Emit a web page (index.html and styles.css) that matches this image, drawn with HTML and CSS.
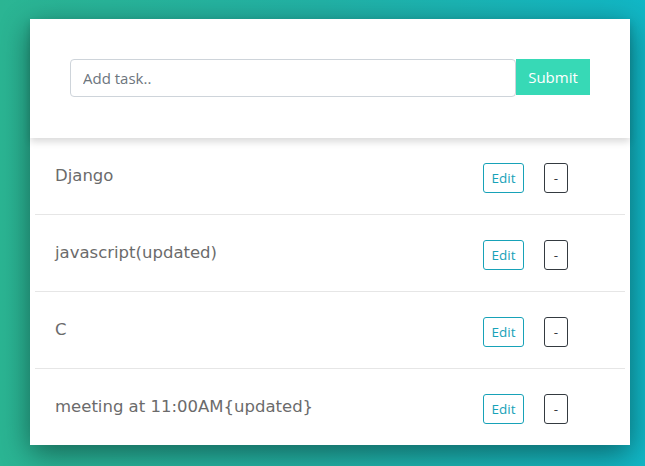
FILE: index.html
```html
<!DOCTYPE html>
<html lang="en">
<head>
<meta charset="utf-8">
<title>Tasks</title>
<link rel="stylesheet" href="styles.css">
</head>
<body>
<div class="card">
  <form class="card-header">
    <input class="task-input" type="text" placeholder="Add task..">
    <button class="submit-btn" type="button">Submit</button>
  </form>
  <div class="task-list">
    <div class="task-row">
      <span class="task-title">Django</span>
      <button class="btn-edit" type="button">Edit</button>
      <button class="btn-delete" type="button">-</button>
    </div>
    <div class="task-row">
      <span class="task-title">javascript(updated)</span>
      <button class="btn-edit" type="button">Edit</button>
      <button class="btn-delete" type="button">-</button>
    </div>
    <div class="task-row">
      <span class="task-title">C</span>
      <button class="btn-edit" type="button">Edit</button>
      <button class="btn-delete" type="button">-</button>
    </div>
    <div class="task-row last">
      <span class="task-title">meeting at 11:00AM{updated}</span>
      <button class="btn-edit" type="button">Edit</button>
      <button class="btn-delete" type="button">-</button>
    </div>
  </div>
</div>
</body>
</html>
```

FILE: styles.css
```css
* { box-sizing: border-box; }

html, body {
  margin: 0;
  height: 100%;
}

body {
  background: linear-gradient(to right, #2bb593 0%, #22b2a6 50%, #11b7c6 100%);
  padding: 19px 0 0 30px;
  overflow: hidden;
  font-family: "Open Sans", "Noto Sans", sans-serif;
}

.card {
  width: 600px;
  background: #ffffff;
  box-shadow: 0 8px 28px rgba(0, 0, 0, 0.45);
}

.card-header {
  position: relative;
  z-index: 1;
  display: flex;
  align-items: flex-start;
  height: 119px;
  margin: 0;
  padding: 40px 40px 0 40px;
  background: #ffffff;
  box-shadow: 0 4px 7px rgba(0, 0, 0, 0.14);
}

.task-input {
  width: 446px;
  height: 38px;
  margin: 0;
  padding: 6px 12px;
  border: 1px solid #ced4da;
  border-radius: 4px;
  font-family: "Open Sans", "Noto Sans", sans-serif;
  font-size: 15px;
  color: #495057;
  outline: none;
}

.task-input::placeholder {
  color: #6c757d;
}

.submit-btn {
  width: 74px;
  height: 36px;
  margin: 0;
  padding: 0;
  border: none;
  background: #37d9b6;
  color: #ffffff;
  font-family: "Open Sans", "Noto Sans", sans-serif;
  font-size: 15px;
}

.task-list {
  padding: 0 5px;
}

.task-row {
  display: flex;
  align-items: flex-start;
  height: 77px;
  padding: 25px 57px 0 20px;
  border-bottom: 1px solid #e6e6e6;
}

.task-row.last {
  border-bottom: none;
  height: 76px;
}

.task-title {
  flex: 1;
  font-family: "DejaVu Sans", sans-serif;
  font-size: 16.5px;
  line-height: 26px;
  color: #6b6b6b;
}

.btn-edit,
.btn-delete {
  display: flex;
  align-items: center;
  justify-content: center;
  height: 30px;
  margin: 0;
  padding: 0;
  background: #ffffff;
  border-radius: 3px;
  font-family: "Open Sans", "Noto Sans", sans-serif;
  font-size: 13.5px;
}

.btn-edit {
  width: 41px;
  border: 1px solid #17a2b8;
  color: #17a2b8;
}

.btn-delete {
  width: 24px;
  margin-left: 20px;
  border: 1px solid #343a40;
  color: #343a40;
}
```
